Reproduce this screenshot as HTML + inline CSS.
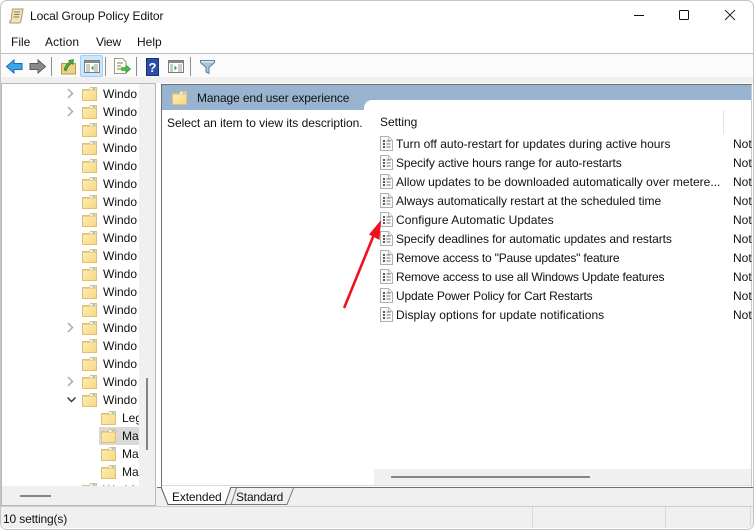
<!DOCTYPE html>
<html><head><meta charset="utf-8">
<style>
html,body{margin:0;padding:0;width:754px;height:530px;overflow:hidden;background:#fff}
body{position:relative;font-family:"Liberation Sans",sans-serif;font-size:12px;color:#111}
.a{position:absolute}
.t{position:absolute;white-space:nowrap;line-height:14px}
svg{position:absolute;overflow:visible}
.s{position:absolute;width:1px;height:19px;top:57px;background:#8f8f8f}
</style></head><body>
<svg width="0" height="0" style="position:absolute">
<defs>
<linearGradient id="fg" x1="0" y1="0" x2="1" y2="1"><stop offset="0" stop-color="#fdeebc"/><stop offset="1" stop-color="#f8d980"/></linearGradient>
<g id="f"><path d="M.5 2.500V13.500H14.500V.5H8.500L7.500 2.500Z" fill="url(#fg)" stroke="#dcc078"/><path d="M8.500 1H14V3H8Z" fill="#fff8e0"/><path d="M10.500 2H13.500" stroke="#6aa8d8" stroke-width="1.200"/><path d="M1 3.500H14" stroke="#e8cf8a"/></g>
<g id="d"><path d="M.5 .5H8.500L12.500 4.500V14.500H.5Z" fill="#fafafa" stroke="#b0b0b0"/><path d="M8.500 .5V4.500H12.500" fill="#eee" stroke="#bbb"/><path d="M3 5h2M3 8h2M3 11h2" stroke="#222" stroke-width="1.400"/><path d="M6.500 5h4M6.500 8h4M6.500 11h4" stroke="#777"/></g>
<path id="c" d="M0 0L4.500 4.500L0 9" fill="none" stroke="#a6a6a6" stroke-width="1.400"/>
</defs></svg>

<!-- window frame -->
<div class="a" style="left:0;top:0;width:752px;height:528px;border:1px solid #c4c4c4;border-radius:7px"></div>

<!-- title bar -->
<svg style="left:9px;top:8px" width="16" height="16"><path d="M3.500 1H14L12 12.500C12 14 11 15 10 15H1C0.500 15 0.500 12.500 2 12.500Z" fill="#f3e3bb" stroke="#a9976f"/><path d="M5 4H11M5 6.500H10.500M4.500 9H10" stroke="#8b7a55"/></svg>
<div class="t" style="left:30px;top:9px;font-size:12px;letter-spacing:-.08px">Local Group Policy Editor</div>
<div class="a" style="left:634px;top:15px;width:10px;height:1px;background:#111"></div>
<div class="a" style="left:679px;top:10px;width:8px;height:8px;border:1px solid #111;border-radius:1.500px"></div>
<svg style="left:725px;top:10px" width="10" height="10"><path d="M0 0L10 10M10 0L0 10" stroke="#222" stroke-width="1"/></svg>

<!-- menu -->
<div class="t" style="left:11px;top:35px">File</div>
<div class="t" style="left:45px;top:35px;letter-spacing:.15px">Action</div>
<div class="t" style="left:96px;top:35px;letter-spacing:-.2px">View</div>
<div class="t" style="left:137px;top:35px">Help</div>
<div class="a" style="left:1px;top:53px;width:752px;height:1px;background:#bcbcc4"></div>

<!-- toolbar -->
<div class="a" style="left:1px;top:54px;width:752px;height:23px;background:#fbfbfb"></div>
<div class="a" style="left:1px;top:77px;width:752px;height:6px;background:#f0f0f0"></div>
<svg style="left:6px;top:59px" width="17" height="15"><path d="M.5 7.500L8 1V4.500H16V10.500H8V14Z" fill="#3ea4ec" stroke="#1c6cb0"/></svg>
<svg style="left:29px;top:59px" width="17" height="15"><path d="M16.500 7.500L9 1V4.500H1V10.500H9V14Z" fill="#8a8a8a" stroke="#5c5c5c"/></svg>
<div class="s" style="left:51px"></div>
<svg style="left:61px;top:58px" width="15" height="17"><path d="M.5 5.500H14.500V16H.5Z" fill="#f0d084" stroke="#b89a50"/><path d="M3 12C4 8 6 5 9 4L7.500 2.500L12.500 1.500L12 6.500L10.500 5.500C8 7 6 9 5.500 13Z" fill="#49a83a" stroke="#2d7a24" stroke-width=".6"/></svg>
<div class="a" style="left:80px;top:55px;width:21px;height:20px;background:#cde6f9;border:1px solid #99d1ff;border-radius:2px"></div>
<svg style="left:84px;top:60px" width="16" height="13"><path d="M.5 .5H15.500V12.500H.5Z" fill="#fff" stroke="#7c7c7c"/><path d="M1 1H15V3H1Z" fill="#8a8a8a"/><path d="M2 5H6M2 7H6M2 9H6M2 11H6M10 5H14M10 7H14M10 9H14M10 11H14" stroke="#999"/><path d="M9.500 5.500V10.500L7 8Z" fill="#2fa52f"/></svg>
<div class="s" style="left:105px"></div>
<svg style="left:114px;top:58px" width="17" height="17"><path d="M.5 .5H8.500L12 4V15.500H.5Z" fill="#fffdf0" stroke="#9a9a8a"/><path d="M3 5H9M3 8H7M3 11H7" stroke="#777"/><path d="M7.500 9.500H12V7L16.500 11L12 15V12.500H7.500Z" fill="#4cb848" stroke="#2d8a2a" stroke-width=".6"/></svg>
<div class="s" style="left:136px"></div>
<div class="a" style="left:146px;top:58px;width:13px;height:18px;background:#2c4ea6;border:1px solid #1c3070;box-sizing:border-box;color:#fff;font:bold 13px/17px 'Liberation Sans',sans-serif;text-align:center">?</div>
<svg style="left:168px;top:60px" width="16" height="13"><path d="M.5 .5H15.500V12.500H.5Z" fill="#fff" stroke="#7c7c7c"/><path d="M1 1H15V3H1Z" fill="#8a8a8a"/><path d="M2 5H5M2 7H5M2 9H5M2 11H5M10 5H14M10 7H14M10 9H14M10 11H14" stroke="#999"/><path d="M6.500 5.500V10.500L9 8Z" fill="#2fa52f"/></svg>
<div class="s" style="left:190px"></div>
<svg style="left:200px;top:60px" width="15" height="14"><path d="M.5 .5H14.500V2.500L9 7.500V13.500L6 12V7.500L.5 2.500Z" fill="#a9c2d8" stroke="#65808f"/><path d="M1 1H14V2.500H1Z" fill="#dbe6ef"/></svg>

<!-- left pane -->
<div class="a" style="left:1px;top:83px;width:155px;height:423px;background:#f0f0f0;border:1px solid #b8b8b8;border-width:1px 1px 1px 1px;box-sizing:border-box"></div>
<div class="a" id="tree" style="left:2px;top:84px;width:137px;height:402px;background:#fff;overflow:hidden">
<div class="a" style="left:97px;top:343px;width:41px;height:18px;background:#d9d9d9"></div>
<svg style="left:66px;top:5px"><use href="#c"/></svg>
<svg style="left:66px;top:23px"><use href="#c"/></svg>
<svg style="left:66px;top:239px"><use href="#c"/></svg>
<svg style="left:66px;top:293px"><use href="#c"/></svg>
<svg style="left:65px;top:313px" width="10" height="6"><path d="M.5 .5L4.500 4.500L8.500 .5" fill="none" stroke="#333" stroke-width="1.400"/></svg>
<svg style="left:80px;top:3px" width="15" height="15"><use href="#f"/></svg><div class="t" style="left:101px;top:3px">Windo</div>
<svg style="left:80px;top:21px" width="15" height="15"><use href="#f"/></svg><div class="t" style="left:101px;top:21px">Windo</div>
<svg style="left:80px;top:39px" width="15" height="15"><use href="#f"/></svg><div class="t" style="left:101px;top:39px">Windo</div>
<svg style="left:80px;top:57px" width="15" height="15"><use href="#f"/></svg><div class="t" style="left:101px;top:57px">Windo</div>
<svg style="left:80px;top:75px" width="15" height="15"><use href="#f"/></svg><div class="t" style="left:101px;top:75px">Windo</div>
<svg style="left:80px;top:93px" width="15" height="15"><use href="#f"/></svg><div class="t" style="left:101px;top:93px">Windo</div>
<svg style="left:80px;top:111px" width="15" height="15"><use href="#f"/></svg><div class="t" style="left:101px;top:111px">Windo</div>
<svg style="left:80px;top:129px" width="15" height="15"><use href="#f"/></svg><div class="t" style="left:101px;top:129px">Windo</div>
<svg style="left:80px;top:147px" width="15" height="15"><use href="#f"/></svg><div class="t" style="left:101px;top:147px">Windo</div>
<svg style="left:80px;top:165px" width="15" height="15"><use href="#f"/></svg><div class="t" style="left:101px;top:165px">Windo</div>
<svg style="left:80px;top:183px" width="15" height="15"><use href="#f"/></svg><div class="t" style="left:101px;top:183px">Windo</div>
<svg style="left:80px;top:201px" width="15" height="15"><use href="#f"/></svg><div class="t" style="left:101px;top:201px">Windo</div>
<svg style="left:80px;top:219px" width="15" height="15"><use href="#f"/></svg><div class="t" style="left:101px;top:219px">Windo</div>
<svg style="left:80px;top:237px" width="15" height="15"><use href="#f"/></svg><div class="t" style="left:101px;top:237px">Windo</div>
<svg style="left:80px;top:255px" width="15" height="15"><use href="#f"/></svg><div class="t" style="left:101px;top:255px">Windo</div>
<svg style="left:80px;top:273px" width="15" height="15"><use href="#f"/></svg><div class="t" style="left:101px;top:273px">Windo</div>
<svg style="left:80px;top:291px" width="15" height="15"><use href="#f"/></svg><div class="t" style="left:101px;top:291px">Windo</div>
<svg style="left:80px;top:309px" width="15" height="15"><use href="#f"/></svg><div class="t" style="left:101px;top:309px">Windo</div>
<svg style="left:99px;top:327px" width="15" height="15"><use href="#f"/></svg><div class="t" style="left:120px;top:327px">Leg</div>
<svg style="left:99px;top:345px" width="15" height="15"><use href="#f"/></svg><div class="t" style="left:120px;top:345px">Ma</div>
<svg style="left:99px;top:363px" width="15" height="15"><use href="#f"/></svg><div class="t" style="left:120px;top:363px">Ma</div>
<svg style="left:99px;top:381px" width="15" height="15"><use href="#f"/></svg><div class="t" style="left:120px;top:381px">Ma</div>
<svg style="left:80px;top:399px" width="15" height="15"><use href="#f"/></svg><div class="t" style="left:101px;top:399px">Workf</div>
</div>
<div class="a" style="left:146px;top:378px;width:2px;height:72px;background:#858585"></div>
<div class="a" style="left:20px;top:495px;width:31px;height:2px;background:#858585"></div>

<!-- right pane -->
<div class="a" style="left:161px;top:84px;width:591px;height:403px;background:#fff;border:1px solid #6e6e6e;border-right:1px solid #c8c8c8;border-bottom:0;box-sizing:border-box"></div>
<div class="a" style="left:162px;top:85px;width:589px;height:15px;background:#99b4d1"></div>
<div class="a" style="left:162px;top:100px;width:202px;height:10px;background:#99b4d1"></div>
<div class="a" style="left:364px;top:100px;width:8px;height:8px;background:#99b4d1"></div>
<div class="a" style="left:364px;top:100px;width:8px;height:8px;background:#fff;border-top-left-radius:8px"></div>
<svg style="left:172px;top:91px" width="15" height="15"><use href="#f"/></svg>
<div class="t" style="left:197px;top:91px;letter-spacing:-.12px">Manage end user experience</div>
<div class="t" style="left:167px;top:116px;letter-spacing:-.03px">Select an item to view its description.</div>

<div class="t" style="left:380px;top:115px">Setting</div>
<div class="a" style="left:723px;top:110px;width:1px;height:24px;background:#e5e5e5"></div>

<svg style="left:380px;top:136px" width="13" height="15"><use href="#d"/></svg><div class="t" style="left:396px;top:137px;letter-spacing:.02px">Turn off auto-restart for updates during active hours</div><div class="t" style="left:733px;top:137px">Not</div>
<svg style="left:380px;top:155px" width="13" height="15"><use href="#d"/></svg><div class="t" style="left:396px;top:156px;letter-spacing:-.086px">Specify active hours range for auto-restarts</div><div class="t" style="left:733px;top:156px">Not</div>
<svg style="left:380px;top:174px" width="13" height="15"><use href="#d"/></svg><div class="t" style="left:396px;top:175px;letter-spacing:.015px">Allow updates to be downloaded automatically over metere...</div><div class="t" style="left:733px;top:175px">Not</div>
<svg style="left:380px;top:193px" width="13" height="15"><use href="#d"/></svg><div class="t" style="left:396px;top:194px;letter-spacing:-.02px">Always automatically restart at the scheduled time</div><div class="t" style="left:733px;top:194px">Not</div>
<svg style="left:380px;top:212px" width="13" height="15"><use href="#d"/></svg><div class="t" style="left:396px;top:213px;letter-spacing:.06px">Configure Automatic Updates</div><div class="t" style="left:733px;top:213px">Not</div>
<svg style="left:380px;top:231px" width="13" height="15"><use href="#d"/></svg><div class="t" style="left:396px;top:232px;letter-spacing:-.07px">Specify deadlines for automatic updates and restarts</div><div class="t" style="left:733px;top:232px">Not</div>
<svg style="left:380px;top:250px" width="13" height="15"><use href="#d"/></svg><div class="t" style="left:396px;top:251px;letter-spacing:-.2px">Remove access to "Pause updates" feature</div><div class="t" style="left:733px;top:251px">Not</div>
<svg style="left:380px;top:269px" width="13" height="15"><use href="#d"/></svg><div class="t" style="left:396px;top:270px;letter-spacing:-.19px">Remove access to use all Windows Update features</div><div class="t" style="left:733px;top:270px">Not</div>
<svg style="left:380px;top:288px" width="13" height="15"><use href="#d"/></svg><div class="t" style="left:396px;top:289px;letter-spacing:-.17px">Update Power Policy for Cart Restarts</div><div class="t" style="left:733px;top:289px">Not</div>
<svg style="left:380px;top:307px" width="13" height="15"><use href="#d"/></svg><div class="t" style="left:396px;top:308px;letter-spacing:.07px">Display options for update notifications</div><div class="t" style="left:733px;top:308px">Not</div>

<!-- arrow -->
<svg style="left:340px;top:215px" width="50" height="96"><path d="M4.500 92L35 17" stroke="#f01020" stroke-width="2.600" fill="none" stroke-linecap="round"/><path d="M41 5L39.500 25L29 19.500Z" fill="#f01020"/></svg>

<!-- right scrollbar -->
<div class="a" style="left:374px;top:469px;width:377px;height:16px;background:#f0f0f0"></div>
<div class="a" style="left:391px;top:476px;width:199px;height:2px;background:#858585"></div>
<div class="a" style="left:162px;top:485px;width:590px;height:1px;background:#dcdcdc"></div>
<div class="a" style="left:157px;top:487px;width:596px;height:1px;background:#6e6e6e"></div>
<div class="a" style="left:156px;top:488px;width:597px;height:18px;background:#f0f0f0"></div>

<!-- tabs -->
<svg style="left:160px;top:486px" width="140" height="21"><path d="M1 1L8 18.500H65L71 1" fill="#fff" stroke="#555"/><path d="M71 18.500L68 18.500L76 2H134L127 18.500H71Z" fill="#f0f0f0"/><path d="M65 18.500H71L76.500 2M133.500 2L127 18.500H71" fill="none" stroke="#777"/><path d="M2 1H70" stroke="#fff" stroke-width="2"/></svg>
<div class="t" style="left:172px;top:490px;letter-spacing:-.15px">Extended</div>
<div class="t" style="left:236px;top:490px;letter-spacing:-.2px">Standard</div>

<!-- status bar -->
<div class="a" style="left:1px;top:506px;width:752px;height:1px;background:#d0d0d0"></div>
<div class="a" style="left:1px;top:507px;width:752px;height:21px;background:#f0f0f0;border-radius:0 0 6px 6px"></div>
<div class="a" style="left:532px;top:507px;width:1px;height:21px;background:#d8d8d8"></div>
<div class="a" style="left:665px;top:507px;width:1px;height:21px;background:#d8d8d8"></div>
<div class="a" style="left:750px;top:507px;width:1px;height:19px;background:#d8d8d8"></div>
<div class="t" style="left:3px;top:512px;letter-spacing:-.15px">10 setting(s)</div>
</body></html>
